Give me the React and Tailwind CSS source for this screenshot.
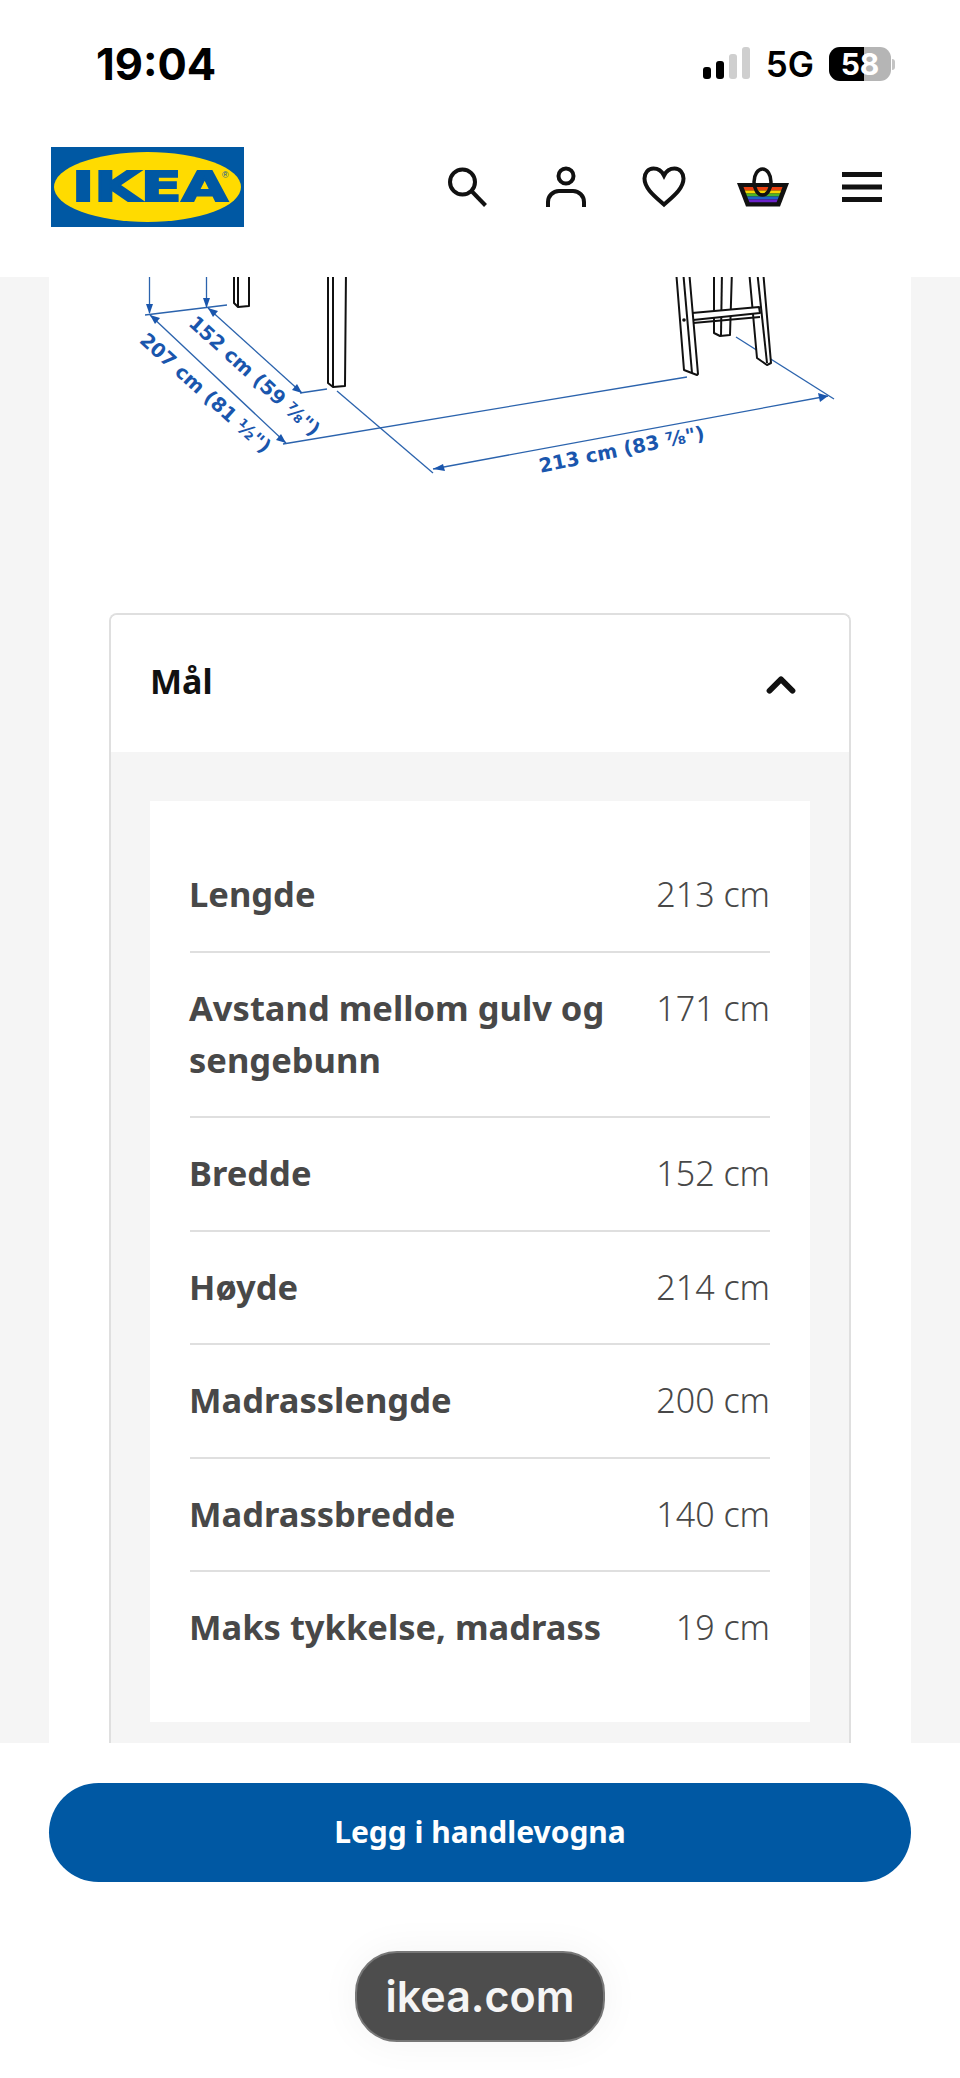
import { ChevronUp } from 'lucide-react'

const rows = [
  ['Lengde', '213 cm'],
  ['Avstand mellom gulv og sengebunn', '171 cm'],
  ['Bredde', '152 cm'],
  ['Høyde', '214 cm'],
  ['Madrasslengde', '200 cm'],
  ['Madrassbredde', '140 cm'],
  ['Maks tykkelse, madrass', '19 cm']
]

function IkeaLogo() {
  return (
    <svg width="193" height="80" viewBox="0 0 193 80">
      <rect width="193" height="80" fill="#0058a3" />
      <ellipse cx="96.5" cy="40" rx="93.5" ry="35" fill="#ffdb00" />
      <text
        x="21"
        y="54"
        textLength="156"
        lengthAdjust="spacingAndGlyphs"
        fontFamily="'DejaVu Sans', sans-serif"
        fontWeight="700"
        fontSize="40"
        fill="#0058a3"
        stroke="#0058a3"
        strokeWidth="1.800"
      >
        IKEA
      </text>
      <text x="171" y="31" fontSize="9" fontFamily="'Liberation Sans', sans-serif" fill="#0058a3">®</text>
    </svg>
  )
}

function SearchIcon() {
  return (
    <svg width="42" height="42" viewBox="0 0 42 42" fill="none" stroke="#111" strokeWidth="4">
      <circle cx="16.5" cy="16" r="12.5" />
      <path d="M25.5 25l14 14.5" />
    </svg>
  )
}

function PersonIcon() {
  return (
    <svg width="42" height="42" viewBox="0 0 42 42" fill="none" stroke="#111" strokeWidth="4">
      <circle cx="21" cy="10" r="7.5" />
      <path d="M3 41v-5a11 11 0 0 1 11-11h14a11 11 0 0 1 11 11v5" />
    </svg>
  )
}

function HeartIcon() {
  return (
    <svg width="44" height="42" viewBox="0 0 44 42" fill="none" stroke="#111" strokeWidth="4">
      <path d="M22 9.5C19.5 4.5 15.5 2.5 11.5 2.500C6 2.500 2.500 7 2.500 12.500C2.500 22.500 13 30.500 22 38.500C31 30.500 41.500 22.500 41.500 12.500C41.500 7 38 2.500 32.500 2.500C28.500 2.500 24.500 4.500 22 9.500Z" />
    </svg>
  )
}

function BasketIcon() {
  return (
    <svg width="52" height="40" viewBox="0 0 52 40">
      <defs>
        <clipPath id="kurv">
          <path d="M6.500 20H45.500L39.500 35.500H12.500z" />
        </clipPath>
      </defs>
      <path d="M0 16h52l-9 23.500H9z" fill="#111" />
      <g clipPath="url(#kurv)">
        <rect y="20" width="52" height="3.500" fill="#e8400f" />
        <rect y="23.500" width="52" height="3" fill="#f7d500" />
        <rect y="26.500" width="52" height="3" fill="#49b527" />
        <rect y="29.500" width="52" height="3" fill="#1d63c7" />
        <rect y="32.500" width="52" height="3" fill="#6a21c9" />
      </g>
      <ellipse cx="25.500" cy="15" rx="8.500" ry="13" fill="none" stroke="#111" strokeWidth="3.500" />
    </svg>
  )
}

function MenuIcon() {
  return (
    <svg width="40" height="30" viewBox="0 0 40 30" fill="#111">
      <rect width="40" height="5" />
      <rect y="12.500" width="40" height="5" />
      <rect y="25" width="40" height="5" />
    </svg>
  )
}

function Drawing() {
  const blue = '#2b63ad'
  const label = '#1a56ad'
  return (
    <svg className="block" width="862" height="336" viewBox="49 277 862 336">
      <path d="M736 337L834 399" fill="none" stroke={blue} strokeWidth="1.300" />

      {/* ben */}
      <g fill="#fff" stroke="#111" strokeWidth="2" strokeLinejoin="round">
        <path d="M234 270V303L238 307L249 306V270" />
        <path d="M238 270V307" />
        <path d="M328 270V383L333 387L345 386L346 270" />
        <path d="M333 270V387" />
        <path d="M714 270V333L720 336L730 335L732 270" />
        <path d="M722 270L721 336" />
        <path d="M749 270L757 358L767 365L771 363L763 270" />
        <path d="M757 270L767 363" />
        <path d="M692 313L759 307L760 313L693 320" />
        <path d="M693 323L760 317" />
        <path d="M676 270L684 370L697 375L698 374L689 270" />
        <path d="M683 270L692 373" />
      </g>
      <circle cx="684" cy="320" r="1.800" fill="#111" />

      {/* mål-linjer */}
      <g fill="none" stroke={blue} strokeWidth="1.300">
        <path d="M149.500 270V313" />
        <path d="M206.500 270V307" />
        <path d="M145 315L227 305" />
        <path d="M208 308L302 393" />
        <path d="M300 393L327 389" />
        <path d="M150 315L286 443" />
        <path d="M283 444L687 377" />
        <path d="M337 391L433 473" />
        <path d="M433 469L828 396" />
      </g>
      <g fill={label}>
        <path d="M149.500 314L146 304H153z" />
        <path d="M206.500 308L203 298H210z" />
        <path d="M208 308L218 311L213 317z" />
        <path d="M302 393L292 390L297 384z" />
        <path d="M150 315L160 318L155 324z" />
        <path d="M286 443L276 440L281 434z" />
        <path d="M433 469L443 464L445 471z" />
        <path d="M828 396L818 393L820 402z" />
      </g>

      <g fill={label} fontFamily="'DejaVu Sans', sans-serif" fontWeight="700" fontSize="19.500" textAnchor="middle">
        <text transform="translate(250 381) rotate(42)">152 cm (59 ⅞")</text>
        <text transform="translate(201 398) rotate(42)">207 cm (81 ½")</text>
        <text transform="translate(623 456) rotate(-11.500)">213 cm (83 ⅞")</text>
      </g>
    </svg>
  )
}

function App() {
  return (
    <div className="w-[960px] h-[2078px] overflow-hidden flex flex-col bg-white font-['Noto_Sans',sans-serif]">

      {/* statuslinje */}
      <div className="h-[100px] shrink-0 flex justify-between pt-[47px] pl-[96px] pr-[65px]">
        <span className="font-['Inter',sans-serif] font-bold text-[43.500px] leading-[34px] text-black">
          19:04
        </span>

        <div className="flex items-start">
          <div className="flex items-end gap-[5px] h-[32px] w-[47px]">
            <span className="w-[8px] h-[12px] rounded-[3px] bg-black" />
            <span className="w-[8px] h-[18px] rounded-[3px] bg-black" />
            <span className="w-[8px] h-[25px] rounded-[3px] bg-[#cfcfcf]" />
            <span className="w-[8px] h-[32px] rounded-[3px] bg-[#cfcfcf]" />
          </div>
          <span className="ml-[16px] mt-[1px] font-['Inter',sans-serif] font-semibold text-[35px] leading-[32px] text-black">
            5G
          </span>
          <div className="ml-[15px] flex items-center">
            <div className="relative w-[62px] h-[34px] rounded-[11px] overflow-hidden bg-[#b5b5b5] flex items-center justify-center">
              <div className="absolute left-0 top-0 bottom-0 w-[35px] bg-black" />
              <span className="relative font-['Inter',sans-serif] font-bold text-[30px] leading-none text-white">
                58
              </span>
            </div>
            <div className="ml-[1px] w-[3px] h-[11px] rounded-r-full bg-[#c4c4c4]" />
          </div>
        </div>
      </div>

      {/* meny */}
      <header className="h-[177px] shrink-0 flex items-center justify-between pl-[51px] pr-[49px] pb-[3px]">
        <IkeaLogo />
        <nav className="flex items-center">
          <div className="w-[99px] pl-[2px] flex justify-center"><SearchIcon /></div>
          <div className="w-[99px] pl-[2px] flex justify-center"><PersonIcon /></div>
          <div className="w-[99px] flex justify-center"><HeartIcon /></div>
          <div className="w-[99px] flex justify-center"><BasketIcon /></div>
          <div className="w-[99px] flex justify-center"><MenuIcon /></div>
        </nav>
      </header>

      {/* innhold */}
      <main className="h-[1466px] shrink-0 overflow-hidden bg-[#f5f5f5] px-[49px]">
        <div className="h-full bg-white">
          <Drawing />

          <div className="mx-[60px] border-2 border-b-0 border-[#dfdfdf] rounded-t-lg overflow-hidden">
            <div className="h-[137px] flex items-center justify-between pl-[39px] pr-[45px] pb-[5px] bg-white">
              <span className="font-bold text-[34px] text-[#111]">Mål</span>
              <ChevronUp size={46} strokeWidth={3} className="text-[#111] mt-[7px]" />
            </div>

            <div className="bg-[#f5f5f5] px-[39px] pt-[49px] pb-[40px]">
              <div className="bg-white px-[40px] py-[38px]">
                {rows.map((row, index) => (
                  <div
                    key={row[0]}
                    className={
                      index === rows.length - 1
                        ? 'flex justify-between pt-[29px] pb-[31px] text-[#484848] text-[34px] leading-[52px]'
                        : 'flex justify-between pt-[29px] pb-[30.500px] border-b-2 border-[#dfdfdf] text-[#484848] text-[34px] leading-[52px]'
                    }
                  >
                    <span className="w-[430px] -ml-[1px] font-bold text-[34.500px]">{row[0]}</span>
                    <span className="font-light">{row[1]}</span>
                  </div>
                ))}
              </div>
            </div>
          </div>
        </div>
      </main>

      {/* bunn */}
      <div className="flex-1 flex flex-col items-center bg-white px-[49px] pt-[40px]">
        <button className="w-full h-[99px] rounded-full bg-[#0058a3] text-white font-bold text-[30px] pb-[2px]">
          Legg i handlevogna
        </button>
        <div className="mt-[69px] w-[250px] h-[91px] rounded-[42px] border-2 border-[#777] bg-[#4d4d4d] flex items-center justify-center shadow-[0_0_40px_rgba(0,0,0,0.05)]">
          <span className="font-['Inter',sans-serif] font-semibold text-[43px] leading-none text-[#f5f5f5]">
            ikea.com
          </span>
        </div>
      </div>

    </div>
  )
}

export default App
